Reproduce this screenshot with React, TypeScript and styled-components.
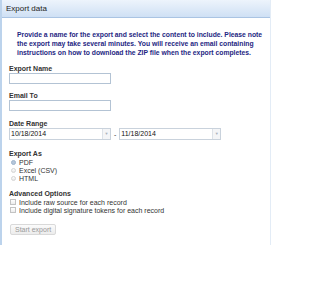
import styled, { createGlobalStyle } from "styled-components"

const Global = createGlobalStyle`
  html, body {
    margin: 0;
    padding: 0;
    background: #fff;
  }
  body {
    font-family: "Liberation Sans", Arial, sans-serif;
    color: #333;
  }
`

const Panel = styled.section`
  width: 268px;
  border-left: 2px solid #bcd3ec;
  border-right: 1px solid #e3ecf6;
  padding-bottom: 9px;
`
const Header = styled.header`
  height: 17px;
  line-height: 17px;
  padding-left: 4px;
  font-size: 8px;
  color: #222;
  background: linear-gradient(#edf4fc, #cfe0f4);
  border-bottom: 1px solid #aac4e3;
`
const Body = styled.div`
  padding: 12px 0 0 7px;
`
const Intro = styled.p`
  margin: 0 0 0 8px;
  font-size: 6.8px;
  line-height: 9px;
  font-weight: bold;
  color: #1e2682;
`
const Field = styled.div<{ $mt: number }>`
  margin-top: ${(p) => p.$mt}px;
`
const Label = styled.div`
  font-size: 7px;
  line-height: 9px;
  font-weight: bold;
  color: #333;
`
const TextBox = styled.input`
  display: block;
  box-sizing: border-box;
  width: 102px;
  height: 11px;
  margin: 0;
  padding: 0 1px;
  border: 1px solid #b3c3d4;
  background: #fff;
  outline: none;
`
const DateRow = styled.div`
  display: flex;
  align-items: center;
  gap: 2px;
`
const DateBox = styled.div`
  display: flex;
  box-sizing: border-box;
  width: 102px;
  height: 12px;
  border: 1px solid #c9d2dc;
  background: #fff;
`
const DateValue = styled.span`
  flex: 1;
  padding-left: 1px;
  font-size: 7px;
  line-height: 10px;
  color: #111;
`
const DateArrow = styled.span`
  width: 7px;
  border-left: 1px solid #dde2e8;
  background: #f4f5f7;
  color: #a8b0bb;
  font-size: 4px;
  line-height: 10px;
  text-align: center;
`
const Dash = styled.span`
  font-size: 7px;
  color: #333;
  padding: 0 1px;
`
const OptionRow = styled.label`
  display: flex;
  align-items: center;
  height: 8px;
  font-size: 7px;
  color: #333;
`
const Radio = styled.span<{ $checked?: boolean }>`
  box-sizing: border-box;
  width: 5px;
  height: 5px;
  margin: 0 3px 0 2px;
  border-radius: 50%;
  border: 1px solid ${(p) => (p.$checked ? "#9fb4cc" : "#d4d4d4")};
  background: ${(p) => (p.$checked ? "#b5c6da" : "linear-gradient(#fdfdfd, #e8e8e8)")};
`
const Check = styled.span`
  box-sizing: border-box;
  width: 6px;
  height: 6px;
  margin: 0 3px 0 1px;
  border: 1px solid #c3c3c3;
  background: linear-gradient(#fff, #ececec);
`
const Button = styled.button`
  margin: 10px 0 0 1px;
  height: 11px;
  padding: 0 4px;
  font-family: inherit;
  font-size: 7px;
  line-height: 9px;
  color: #999;
  background: linear-gradient(#fbfbfb, #ececec);
  border: 1px solid #d9d9d9;
  border-radius: 2px;
`

export default function App() {
  return (
    <>
      <Global />
      <Panel>
        <Header>Export data</Header>
        <Body>
          <Intro>
            Provide a name for the export and select the content to include. Please note
            the export may take several minutes. You will receive an email containing
            instructions on how to download the ZIP file when the export completes.
          </Intro>
          <Field $mt={7}>
            <Label>Export Name</Label>
            <TextBox />
          </Field>
          <Field $mt={7}>
            <Label>Email To</Label>
            <TextBox />
          </Field>
          <Field $mt={8}>
            <Label>Date Range</Label>
            <DateRow>
              <DateBox>
                <DateValue>10/18/2014</DateValue>
                <DateArrow>▼</DateArrow>
              </DateBox>
              <Dash>-</Dash>
              <DateBox>
                <DateValue>11/18/2014</DateValue>
                <DateArrow>▼</DateArrow>
              </DateBox>
            </DateRow>
          </Field>
          <Field $mt={9}>
            <Label>Export As</Label>
            <OptionRow><Radio $checked />PDF</OptionRow>
            <OptionRow><Radio />Excel (CSV)</OptionRow>
            <OptionRow><Radio />HTML</OptionRow>
          </Field>
          <Field $mt={7}>
            <Label>Advanced Options</Label>
            <OptionRow><Check />Include raw source for each record</OptionRow>
            <OptionRow><Check />Include digital signature tokens for each record</OptionRow>
          </Field>
          <Button>Start export</Button>
        </Body>
      </Panel>
    </>
  )
}
